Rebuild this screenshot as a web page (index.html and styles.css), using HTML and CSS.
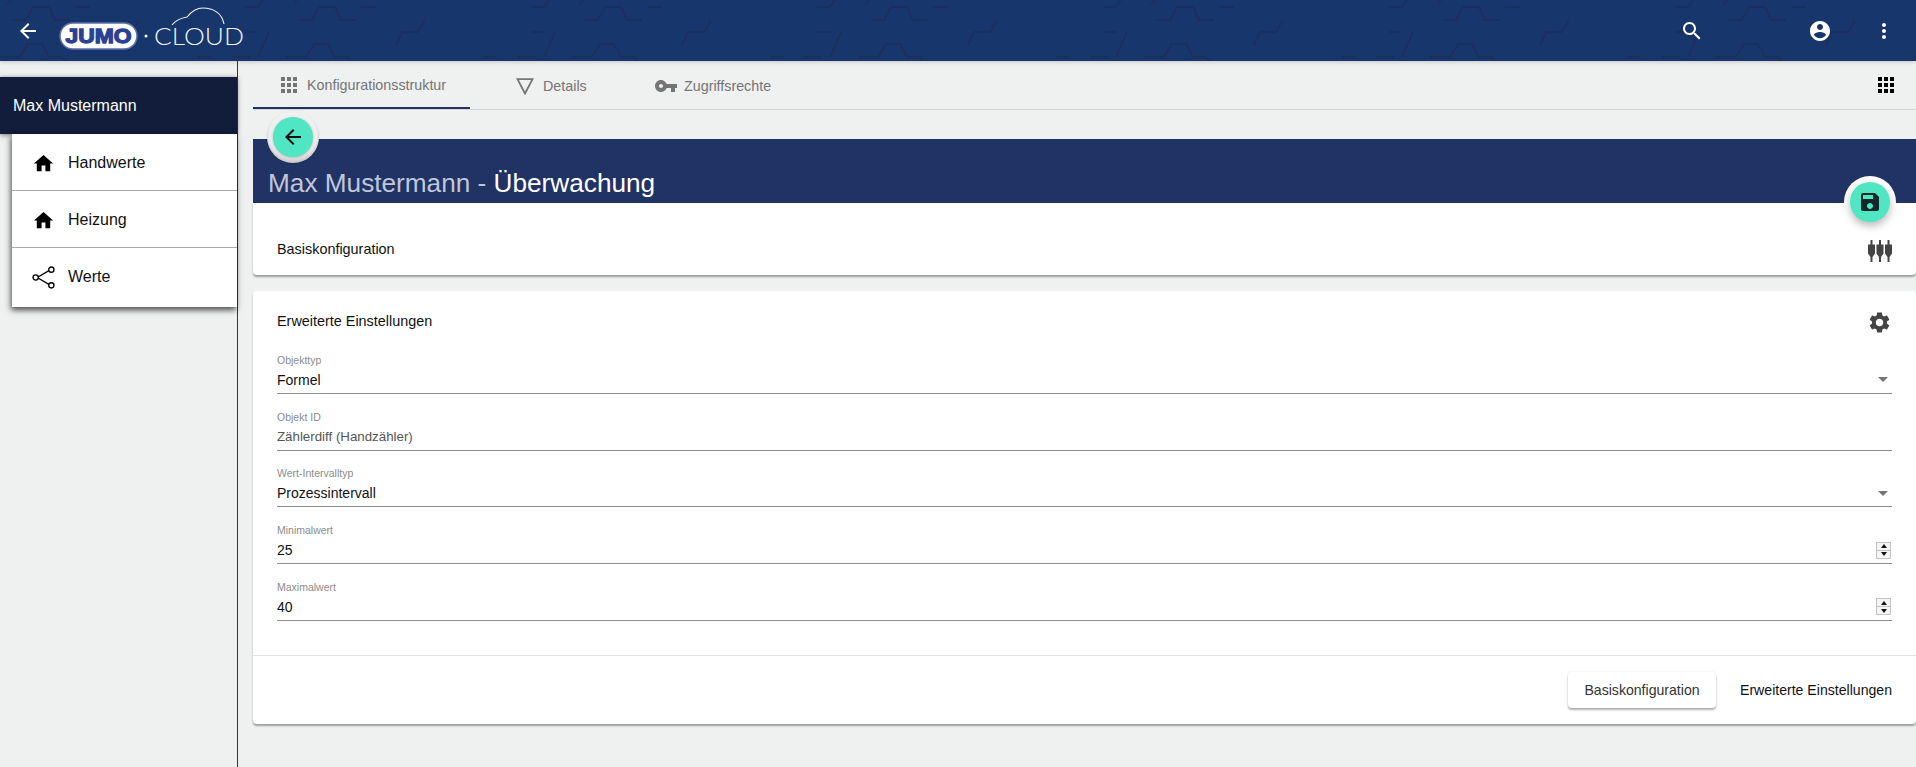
FILE: index.html
```html
<!DOCTYPE html>
<html lang="de">
<head>
<meta charset="utf-8">
<title>JUMO Cloud</title>
<link rel="stylesheet" href="styles.css">
</head>
<body>
<header class="topbar">
  <svg class="topbar-pattern" aria-hidden="true">
    <defs>
      <pattern id="hex" width="286" height="62" patternUnits="userSpaceOnUse">
        <path class="hex-line" d="M13 20H26L33 7H49L55 20H70M75 7H90M7 5L11 0M110 45L116 32H132L139 20M0 57H20L28 44H42L49 57H62L65 61M245 7H258L263 0M245 32H258M258 57L269 32M232 57H250M198 57H211"/>
      </pattern>
    </defs>
    <rect width="100%" height="100%" fill="url(#hex)"/>
  </svg>
  <button class="icon-btn back-btn" type="button" aria-label="Zurück">
    <svg class="icon" viewBox="0 0 24 24"><path d="M20 11H7.83l5.59-5.59L12 4l-8 8 8 8 1.41-1.41L7.83 13H20v-2z"/></svg>
  </button>
  <svg class="logo" viewBox="0 0 190 48" aria-label="JUMO Cloud">
    <rect class="logo-pill" x="1" y="19" width="77" height="26" rx="13"/>
    <text class="logo-jumo" x="6.500" y="39" textLength="66" lengthAdjust="spacingAndGlyphs">JUMO</text>
    <circle class="logo-dot" cx="87" cy="32" r="1.500"/>
    <text class="logo-cloud" x="95" y="41" textLength="90" lengthAdjust="spacingAndGlyphs">CLOUD</text>
    <path class="logo-arc" d="M113 21C117 16 122 14 128 13C132 8 138 4 144 4C154 4 163 9 165 20"/>
  </svg>
  <button class="icon-btn search-btn" type="button" aria-label="Suche">
    <svg class="icon" viewBox="0 0 24 24"><path d="M15.500 14h-.79l-.28-.27C15.410 12.590 16 11.110 16 9.500 16 5.910 13.090 3 9.500 3S3 5.910 3 9.500 5.910 16 9.500 16c1.610 0 3.090-.59 4.230-1.570l.27.28v.79l5 4.990L20.490 19l-4.990-5zm-6 0C7.010 14 5 11.990 5 9.500S7.010 5 9.500 5 14 7.010 14 9.500 11.990 14 9.500 14z"/></svg>
  </button>
  <button class="icon-btn account-btn" type="button" aria-label="Konto">
    <svg class="icon" viewBox="0 0 24 24"><path d="M12 2C6.480 2 2 6.480 2 12s4.480 10 10 10 10-4.480 10-10S17.520 2 12 2zm0 3c1.660 0 3 1.340 3 3s-1.340 3-3 3-3-1.340-3-3 1.340-3 3-3zm0 14.200c-2.500 0-4.710-1.280-6-3.220.03-1.990 4-3.080 6-3.080 1.990 0 5.970 1.090 6 3.080-1.290 1.940-3.500 3.220-6 3.220z"/></svg>
  </button>
  <button class="icon-btn more-btn" type="button" aria-label="Mehr">
    <svg class="icon" viewBox="0 0 24 24"><path d="M12 8c1.100 0 2-.9 2-2s-.9-2-2-2-2 .9-2 2 .9 2 2 2zm0 2c-1.100 0-2 .9-2 2s.9 2 2 2 2-.9 2-2-.9-2-2-2zm0 6c-1.100 0-2 .9-2 2s.9 2 2 2 2-.9 2-2-.9-2-2-2z"/></svg>
  </button>
</header>

<div class="layout">
  <aside class="sidebar">
    <div class="sidebar-head">Max Mustermann</div>
    <nav class="menu">
      <a class="menu-item">
        <svg class="menu-icon" viewBox="0 0 24 24"><path d="M10 20v-6h4v6h5v-8h3L12 3 2 12h3v8z"/></svg>
        <span>Handwerte</span>
      </a>
      <a class="menu-item">
        <svg class="menu-icon" viewBox="0 0 24 24"><path d="M10 20v-6h4v6h5v-8h3L12 3 2 12h3v8z"/></svg>
        <span>Heizung</span>
      </a>
      <a class="menu-item">
        <svg class="menu-icon share-icon" viewBox="0 0 22 22">
          <path class="share-lines" d="M5 11L17 4M5 11L17 18"/>
          <circle class="share-node" cx="3.500" cy="11" r="2.500"/>
          <circle class="share-node" cx="18.500" cy="3.500" r="2.500"/>
          <circle class="share-node" cx="18.500" cy="18.500" r="2.500"/>
        </svg>
        <span>Werte</span>
      </a>
    </nav>
  </aside>

  <main class="content">
    <div class="tabs">
      <a class="tab tab-config">
        <svg class="tab-icon" viewBox="0 0 24 24"><path d="M4 8h4V4H4v4zm6 12h4v-4h-4v4zm-6 0h4v-4H4v4zm0-6h4v-4H4v4zm6 0h4v-4h-4v4zm6-10v4h4V4h-4zm-6 4h4V4h-4v4zm6 6h4v-4h-4v4zm0 6h4v-4h-4v4z"/></svg>
        <span>Konfigurationsstruktur</span>
      </a>
      <a class="tab tab-details">
        <svg class="tab-icon triangle-icon" viewBox="0 0 18 17"><path d="M1.500 1.200H16.500L9 15.500Z"/></svg>
        <span>Details</span>
      </a>
      <a class="tab tab-access">
        <svg class="tab-icon" viewBox="0 0 24 24"><path d="M12.650 10C11.830 7.670 9.610 6 7 6c-3.310 0-6 2.690-6 6s2.690 6 6 6c2.610 0 4.830-1.670 5.650-4H17v4h4v-4h2v-4H12.650zM7 14c-1.100 0-2-.9-2-2s.9-2 2-2 2 .9 2 2-.9 2-2 2z"/></svg>
        <span>Zugriffsrechte</span>
      </a>
      <button class="apps-btn" type="button" aria-label="Ansicht">
        <svg class="icon" viewBox="0 0 24 24"><path d="M4 8h4V4H4v4zm6 12h4v-4h-4v4zm-6 0h4v-4H4v4zm0-6h4v-4H4v4zm6 0h4v-4h-4v4zm6-10v4h4V4h-4zm-6 4h4V4h-4v4zm6 6h4v-4h-4v4zm0 6h4v-4h-4v4z"/></svg>
      </button>
    </div>

    <section class="band">
      <div class="fab-ring back-ring">
        <button class="fab" type="button" aria-label="Zurück">
          <svg class="icon" viewBox="0 0 24 24"><path d="M20 11H7.830l5.590-5.590L12 4l-8 8 8 8 1.410-1.410L7.830 13H20v-2z"/></svg>
        </button>
      </div>
      <h1 class="band-title"><span class="band-muted">Max Mustermann - </span>Überwachung</h1>
      <div class="fab-ring save-ring">
        <button class="fab save-fab" type="button" aria-label="Speichern">
          <svg class="icon" viewBox="0 0 24 24"><path d="M17 3H5c-1.110 0-2 .9-2 2v14c0 1.100.89 2 2 2h14c1.100 0 2-.9 2-2V7l-4-4zm-5 16c-1.660 0-3-1.340-3-3s1.340-3 3-3 3 1.340 3 3-1.340 3-3 3zm3-10H5V5h10v4z"/></svg>
        </button>
      </div>
    </section>

    <section class="card card-basic">
      <h2 class="card-title">Basiskonfiguration</h2>
      <svg class="card-icon tune-icon" viewBox="0 0 24 22">
        <path d="M2.500 0H4.500V4.500H7V13.500L4.500 17V22H2.500V17L0 13.500V4.500H2.500Z"/>
        <path d="M11 0H13V4.500H15.500V13.500L13 17V22H11V17L8.500 13.500V4.500H11Z"/>
        <path d="M19.500 0H21.500V4.500H24V13.500L21.500 17V22H19.500V17L17 13.500V4.500H19.500Z"/>
      </svg>
    </section>

    <section class="card card-advanced">
      <div class="card-head">
        <h2 class="card-title">Erweiterte Einstellungen</h2>
        <svg class="card-icon gear-icon" viewBox="0 0 24 24"><path d="M19.140 12.940c.04-.3.06-.61.06-.94 0-.32-.02-.64-.07-.94l2.030-1.580c.18-.14.23-.41.12-.61l-1.920-3.320c-.12-.22-.37-.29-.59-.22l-2.390.96c-.5-.38-1.030-.7-1.620-.94l-.36-2.540c-.04-.24-.24-.41-.48-.41h-3.840c-.24 0-.43.17-.47.41l-.36 2.540c-.59.24-1.130.57-1.620.94l-2.390-.96c-.22-.08-.47 0-.59.22L2.740 8.870c-.12.21-.08.47.12.61l2.030 1.580c-.05.3-.09.63-.09.94s.02.64.07.94l-2.030 1.580c-.18.14-.23.41-.12.61l1.920 3.320c.12.22.37.29.59.22l2.390-.96c.5.38 1.030.7 1.620.94l.36 2.540c.05.24.24.41.48.41h3.840c.24 0 .44-.17.47-.41l.36-2.540c.59-.24 1.130-.56 1.620-.94l2.390.96c.22.08.47 0 .59-.22l1.920-3.320c.12-.22.07-.47-.12-.61l-2.010-1.580zM12 15.600c-1.980 0-3.600-1.620-3.600-3.600s1.620-3.600 3.600-3.600 3.600 1.620 3.600 3.600-1.620 3.600-3.600 3.600z"/></svg>
      </div>
      <div class="form">
        <div class="field">
          <div class="field-label">Objekttyp</div>
          <div class="field-value"><span>Formel</span><i class="select-arrow"></i></div>
        </div>
        <div class="field">
          <div class="field-label">Objekt ID</div>
          <div class="field-value field-disabled"><span>Zählerdiff (Handzähler)</span></div>
        </div>
        <div class="field">
          <div class="field-label">Wert-Intervalltyp</div>
          <div class="field-value"><span>Prozessintervall</span><i class="select-arrow"></i></div>
        </div>
        <div class="field">
          <div class="field-label">Minimalwert</div>
          <div class="field-value"><span>25</span><div class="spin"><i class="spin-up"></i><i class="spin-down"></i></div></div>
        </div>
        <div class="field">
          <div class="field-label">Maximalwert</div>
          <div class="field-value"><span>40</span><div class="spin"><i class="spin-up"></i><i class="spin-down"></i></div></div>
        </div>
      </div>
      <div class="card-actions">
        <button class="btn btn-raised" type="button">Basiskonfiguration</button>
        <button class="btn btn-flat" type="button">Erweiterte Einstellungen</button>
      </div>
    </section>
  </main>
</div>
</body>
</html>
```
FILE: styles.css
```css
* { box-sizing: border-box; }

html, body { height: 100%; }

body {
  margin: 0;
  background: #eff0f0;
  font-family: "Liberation Sans", Arial, sans-serif;
  color: #111;
  overflow: hidden;
}

button {
  font: inherit;
  border: 0;
  padding: 0;
  background: none;
  cursor: pointer;
}

.icon { display: block; width: 24px; height: 24px; fill: currentColor; }

/* top bar */
.topbar {
  position: relative;
  z-index: 5;
  display: flex;
  align-items: center;
  height: 61px;
  background: #17366b;
  color: #fff;
  box-shadow: 0 1px 4px rgba(0, 0, 0, .18);
}

.topbar-pattern { position: absolute; inset: 0; width: 100%; height: 100%; }
.hex-line { fill: none; stroke: #1c2e60; stroke-width: 2; }

.icon-btn { position: relative; color: #fff; width: 24px; height: 24px; flex: none; }
.back-btn { margin-left: 16px; }
.search-btn { margin-left: auto; }
.account-btn { margin-left: 104px; }
.more-btn { margin-left: 40px; margin-right: 20px; }

.logo { position: relative; display: block; width: 190px; height: 48px; margin-left: 19px; margin-top: -5px; flex: none; }
.logo-pill { fill: #fff; stroke: #5f70a6; stroke-width: 1.500; }
.logo-jumo { font: 700 21px "Liberation Sans", sans-serif; fill: #2b4193; stroke: #2b4193; stroke-width: 1.300; }
.logo-dot { fill: #fff; }
.logo-cloud { font: 300 24px Lato, "Liberation Sans", sans-serif; fill: #f2f4f8; }
.logo-arc { fill: none; stroke: #f2f4f8; stroke-width: 1.100; }

/* layout */
.layout { display: flex; height: 706px; }

.sidebar {
  flex: none;
  width: 238px;
  padding-top: 16px;
  border-right: 1px solid #22346a;
}

.sidebar-head {
  display: flex;
  align-items: center;
  height: 57px;
  padding-left: 13px;
  background: #111d3a;
  color: #fff;
  font-size: 16px;
  box-shadow: 0 1px 5px rgba(0, 0, 0, .5);
}

.menu {
  position: relative;
  margin-left: 12px;
  background: #fff;
  box-shadow: -1px 3px 6px rgba(0, 0, 0, .7);
}

.menu-item {
  display: flex;
  align-items: center;
  height: 57px;
  padding-top: 2px;
  padding-left: 20px;
  color: #111;
  font-size: 16px;
  border-bottom: 1px solid #aaa;
}

.menu-item:last-child { border-bottom: 0; height: 59px; padding-top: 0; padding-bottom: 1px; }
.menu-item span { margin-left: 13px; }

.menu-icon { display: block; width: 23px; height: 23px; fill: #000; flex: none; }
.share-lines { fill: none; stroke: #000; stroke-width: 1.300; }
.share-node { fill: #fff; stroke: #000; stroke-width: 1.300; }

/* content */
.content { flex: 1; min-width: 0; margin-left: 15px; }

.tabs {
  display: flex;
  align-items: stretch;
  height: 49px;
  margin-bottom: 29px;
  border-bottom: 1px solid #d6d6d6;
  color: #757575;
  font-size: 14.300px;
}

.tab {
  display: flex;
  align-items: center;
  gap: 6px;
  height: 48px;
  padding-top: 2px;
  fill: #757575;
}

.tab-config { width: 217px; padding-left: 24px; border-bottom: 2px solid #213265; }
.tab-details { width: 128px; padding-left: 46px; gap: 9px; }
.tab-access { padding-left: 56px; gap: 6px; }
.tab-icon { display: block; width: 24px; height: 24px; flex: none; }
.triangle-icon { width: 18px; height: 17px; fill: none; stroke: #757575; stroke-width: 1.800; }

.apps-btn { margin-left: auto; margin-right: 18px; color: #000; align-self: center; }

.band {
  position: relative;
  z-index: 2;
  display: flex;
  align-items: flex-end;
  height: 64px;
  padding: 0 0 5px 15px;
  background: #213265;
  color: #fff;
}

.band-title { margin: 0; font-size: 26.200px; line-height: 30px; font-weight: 400; }
.band-muted { color: #bfc7d9; }

.fab-ring {
  position: absolute;
  display: flex;
  align-items: center;
  justify-content: center;
  width: 52px;
  height: 52px;
  border-radius: 50%;
}

.back-ring {
  left: 14px;
  top: -28px;
  background: #eff0f0;
  box-shadow: inset 0 -3px 3px rgba(0, 0, 0, .16), 0 1px 2px rgba(0, 0, 0, .15);
}

.save-ring {
  right: 20px;
  top: 37px;
  background: #fff;
  z-index: 3;
}

.fab {
  display: flex;
  align-items: center;
  justify-content: center;
  width: 40px;
  height: 40px;
  border-radius: 50%;
  background: #50e6c3;
  color: #111;
  box-shadow: 0 1px 3px rgba(0, 0, 0, .25);
}

.save-fab {
  color: #10282a;
  box-shadow: 0 4px 9px rgba(0, 0, 0, .28);
}

.card {
  position: relative;
  background: #fff;
  box-shadow: 0 2px 2px rgba(0, 0, 0, .35);
}

.card-basic {
  display: flex;
  justify-content: space-between;
  align-items: center;
  height: 72px;
  padding: 20px 24px 0;
  border-radius: 0 0 4px 4px;
}

.card-advanced { margin-top: 16px; border-radius: 4px; }

.card-head {
  display: flex;
  justify-content: space-between;
  align-items: center;
  height: 60px;
  padding: 0 24px;
  margin-bottom: 1.750px;
}

.card-title { margin: 0; font-size: 14.400px; font-weight: 400; color: #111; }
.card-icon { display: block; width: 24px; height: 22px; fill: #444; flex: none; margin-top: 4px; }
.gear-icon { width: 25px; height: 25px; margin-top: 2px; }

.form { padding: 0 24px 34.250px; }

.field { height: 56.750px; }
.field:last-child { height: 41px; }

.field-label {
  height: 14px;
  font-size: 10.500px;
  line-height: 14px;
  color: #8c8c8c;
}

.field-value {
  display: flex;
  align-items: center;
  justify-content: space-between;
  height: 27px;
  font-size: 14px;
  color: #111;
  border-bottom: 1px solid #8e8e8e;
}

.field-disabled { color: #555; font-size: 13.300px; }

.select-arrow {
  width: 0;
  height: 0;
  margin-right: 4px;
  border-left: 5px solid transparent;
  border-right: 5px solid transparent;
  border-top: 5px solid #757575;
}

.spin {
  display: flex;
  flex-direction: column;
  gap: 1px;
  width: 15px;
  height: 17px;
  margin-right: 1px;
  padding: 1px;
  background: #c4c4c4;
}

.spin i {
  position: relative;
  flex: 1;
  background: #f4f4f4;
}

.spin i::after {
  content: "";
  position: absolute;
  left: 50%;
  top: 50%;
  margin: -2px 0 0 -3px;
  border-left: 3px solid transparent;
  border-right: 3px solid transparent;
}

.spin-up::after { border-bottom: 4px solid #111; }
.spin-down::after { border-top: 4px solid #111; }

.card-actions {
  display: flex;
  justify-content: flex-end;
  align-items: center;
  gap: 24px;
  padding: 16px 24px;
  border-top: 1px solid #e2e2e2;
}

.btn { height: 36px; font-size: 14.100px; }

.btn-raised {
  width: 148px;
  border-radius: 4px;
  background: #fff;
  color: #333;
  box-shadow: 0 2px 2px rgba(0, 0, 0, .3), 0 0 2px rgba(0, 0, 0, .1);
}

.btn-flat { color: #111; }
```
